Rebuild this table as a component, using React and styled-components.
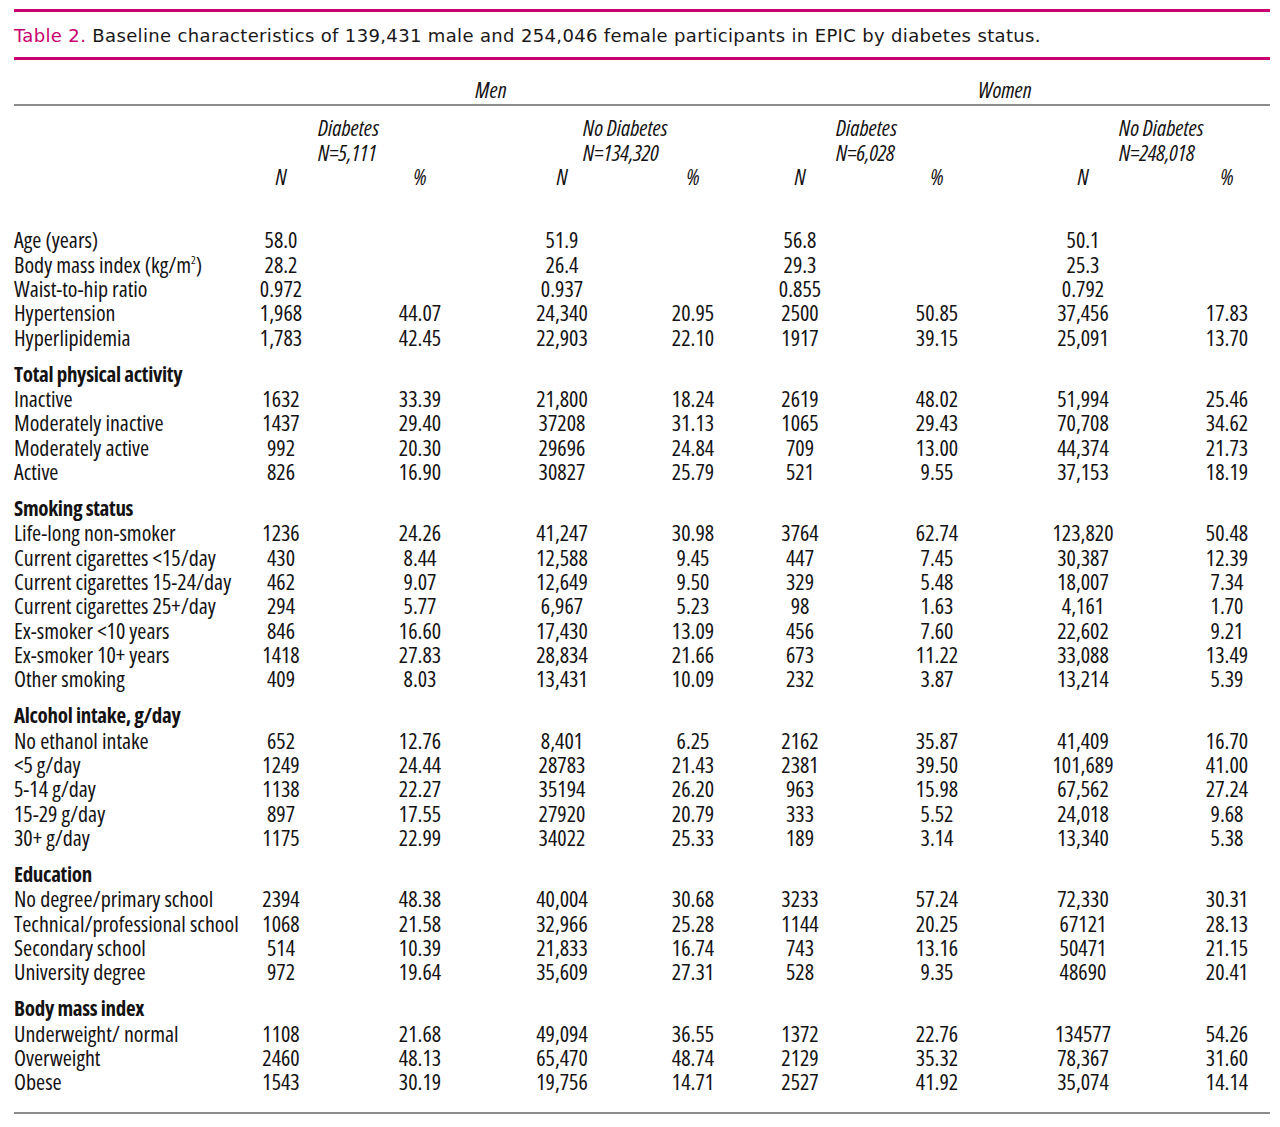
import React from "react";
import styled, { createGlobalStyle } from "styled-components";

const Global = createGlobalStyle`
  body {
    margin: 0;
    background: #ffffff;
    color: #231f20;
  }
`;

// label column + 8 data columns (N / % for each group)
const COLS = "198px 138px 140px 137px 119px 122px 142px 145px 115px";
const SHIFTS = [0, 0, 3.5, 6.5, -7, -2, 0.5, 14.5];

const Page = styled.div`
  padding: 9px 10px 14px 14px;
  width: 1256px;
`;

const Rule = styled.div`
  height: ${(p) => (p.$accent ? 3 : 2)}px;
  background: ${(p) => (p.$accent ? "#c8006f" : "#8c8c8c")};
  margin-top: ${(p) => p.$top || 0}px;
`;

const Title = styled.div`
  margin-top: 12px;
  font-family: "DejaVu Sans", "Liberation Sans", sans-serif;
  font-size: 18px;
  line-height: 24px;
  letter-spacing: 0.35px;
  color: #1a1718;
  white-space: nowrap;
  span {
    color: #c8006f;
  }
`;

const Table = styled.div`
  font-family: "Open Sans", sans-serif;
  font-stretch: 76%;
  font-size: 22px;
  line-height: 24.33px;
  color: #141213;
`;

const HeadRow = styled.div`
  display: grid;
  grid-template-columns: ${COLS};
  margin-top: ${(p) => p.$top || 0}px;
  font-style: italic;
`;

const Span = styled.div`
  grid-column: ${(p) => p.$from} / span ${(p) => p.$span};
  text-align: ${(p) => (p.$indent != null ? "left" : "center")};
  padding-left: ${(p) => (p.$indent != null ? p.$indent : p.$shift > 0 ? p.$shift * 2 : 0)}px;
  padding-right: ${(p) => (p.$shift < 0 ? -p.$shift * 2 : 0)}px;
  white-space: nowrap;
`;

const Body = styled.div`
  margin-top: 39px;
  display: flex;
  flex-direction: column;
  gap: 12.7px;
`;

const Section = styled.div`
  display: flex;
  flex-direction: column;
`;

const SectionHead = styled.div`
  font-weight: 700;
  font-stretch: 75%;
  font-size: 21px;
  letter-spacing: -0.3px;
  white-space: nowrap;
`;

const Row = styled.div`
  display: grid;
  grid-template-columns: ${COLS};
`;

const Label = styled.div`
  white-space: nowrap;
`;

const Cell = styled.div`
  text-align: center;
  white-space: nowrap;
  padding-left: ${(p) => (p.$shift > 0 ? p.$shift * 2 : 0)}px;
  padding-right: ${(p) => (p.$shift < 0 ? -p.$shift * 2 : 0)}px;
`;

const Sup = styled.sup`
  font-size: 11px;
  line-height: 0;
  vertical-align: 9px;
`;

const sections = [
  {
    title: null,
    rows: [
      ["Age (years)", "58.0", "", "51.9", "", "56.8", "", "50.1", ""],
      ["BMI", "28.2", "", "26.4", "", "29.3", "", "25.3", ""],
      ["Waist-to-hip ratio", "0.972", "", "0.937", "", "0.855", "", "0.792", ""],
      ["Hypertension", "1,968", "44.07", "24,340", "20.95", "2500", "50.85", "37,456", "17.83"],
      ["Hyperlipidemia", "1,783", "42.45", "22,903", "22.10", "1917", "39.15", "25,091", "13.70"],
    ],
  },
  {
    title: "Total physical activity",
    rows: [
      ["Inactive", "1632", "33.39", "21,800", "18.24", "2619", "48.02", "51,994", "25.46"],
      ["Moderately inactive", "1437", "29.40", "37208", "31.13", "1065", "29.43", "70,708", "34.62"],
      ["Moderately active", "992", "20.30", "29696", "24.84", "709", "13.00", "44,374", "21.73"],
      ["Active", "826", "16.90", "30827", "25.79", "521", "9.55", "37,153", "18.19"],
    ],
  },
  {
    title: "Smoking status",
    rows: [
      ["Life-long non-smoker", "1236", "24.26", "41,247", "30.98", "3764", "62.74", "123,820", "50.48"],
      ["Current cigarettes <15/day", "430", "8.44", "12,588", "9.45", "447", "7.45", "30,387", "12.39"],
      ["Current cigarettes 15-24/day", "462", "9.07", "12,649", "9.50", "329", "5.48", "18,007", "7.34"],
      ["Current cigarettes 25+/day", "294", "5.77", "6,967", "5.23", "98", "1.63", "4,161", "1.70"],
      ["Ex-smoker <10 years", "846", "16.60", "17,430", "13.09", "456", "7.60", "22,602", "9.21"],
      ["Ex-smoker 10+ years", "1418", "27.83", "28,834", "21.66", "673", "11.22", "33,088", "13.49"],
      ["Other smoking", "409", "8.03", "13,431", "10.09", "232", "3.87", "13,214", "5.39"],
    ],
  },
  {
    title: "Alcohol intake, g/day",
    rows: [
      ["No ethanol intake", "652", "12.76", "8,401", "6.25", "2162", "35.87", "41,409", "16.70"],
      ["<5 g/day", "1249", "24.44", "28783", "21.43", "2381", "39.50", "101,689", "41.00"],
      ["5-14 g/day", "1138", "22.27", "35194", "26.20", "963", "15.98", "67,562", "27.24"],
      ["15-29 g/day", "897", "17.55", "27920", "20.79", "333", "5.52", "24,018", "9.68"],
      ["30+ g/day", "1175", "22.99", "34022", "25.33", "189", "3.14", "13,340", "5.38"],
    ],
  },
  {
    title: "Education",
    rows: [
      ["No degree/primary school", "2394", "48.38", "40,004", "30.68", "3233", "57.24", "72,330", "30.31"],
      ["Technical/professional school", "1068", "21.58", "32,966", "25.28", "1144", "20.25", "67121", "28.13"],
      ["Secondary school", "514", "10.39", "21,833", "16.74", "743", "13.16", "50471", "21.15"],
      ["University degree", "972", "19.64", "35,609", "27.31", "528", "9.35", "48690", "20.41"],
    ],
  },
  {
    title: "Body mass index",
    rows: [
      ["Underweight/ normal", "1108", "21.68", "49,094", "36.55", "1372", "22.76", "134577", "54.26"],
      ["Overweight", "2460", "48.13", "65,470", "48.74", "2129", "35.32", "78,367", "31.60"],
      ["Obese", "1543", "30.19", "19,756", "14.71", "2527", "41.92", "35,074", "14.14"],
    ],
  },
];

const groups = [
  { name: "Diabetes", n: "N=5,111", indent: 106 },
  { name: "No Diabetes", n: "N=134,320", indent: 93 },
  { name: "Diabetes", n: "N=6,028", indent: 90 },
  { name: "No Diabetes", n: "N=248,018", indent: 109 },
];

function RowLabel({ text }) {
  if (text === "BMI") {
    return (
      <Label>
        Body mass index (kg/m<Sup>2</Sup>)
      </Label>
    );
  }
  return <Label>{text}</Label>;
}

export default function App() {
  return (
    <Page>
      <Global />
      <Rule $accent />
      <Title>
        <span>Table 2.</span> Baseline characteristics of 139,431 male and 254,046 female participants in EPIC by diabetes status.
      </Title>
      <Rule $accent $top={9} />
      <Table>
        <HeadRow $top={17}>
          <Span $from={2} $span={4} $shift={12}>Men</Span>
          <Span $from={6} $span={4} $shift={-3}>Women</Span>
        </HeadRow>
        <Rule $top={3} />
        <HeadRow $top={9}>
          {groups.map((g, i) => (
            <Span key={i} $from={2 + i * 2} $span={2} $indent={g.indent}>
              {g.name}
              <br />
              {g.n}
            </Span>
          ))}
        </HeadRow>
        <HeadRow>
          <div />
          {SHIFTS.map((s, i) => (
            <Cell key={i} $shift={s}>
              {i % 2 === 0 ? "N" : "%"}
            </Cell>
          ))}
        </HeadRow>
        <Body>
          {sections.map((sec, si) => (
            <Section key={si}>
              {sec.title && <SectionHead>{sec.title}</SectionHead>}
              {sec.rows.map((r, ri) => (
                <Row key={ri}>
                  <RowLabel text={r[0]} />
                  {r.slice(1).map((v, ci) => (
                    <Cell key={ci} $shift={SHIFTS[ci]}>
                      {v}
                    </Cell>
                  ))}
                </Row>
              ))}
            </Section>
          ))}
        </Body>
        <Rule $top={18} />
      </Table>
    </Page>
  );
}
